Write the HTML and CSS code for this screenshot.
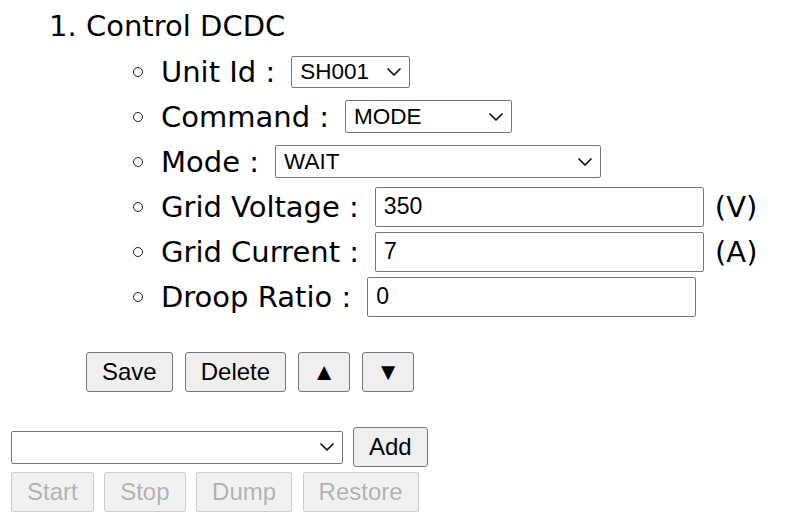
FILE: index.html
```html
<!DOCTYPE html>
<html lang="en">
<head>
<meta charset="utf-8">
<title>Control DCDC</title>
<link rel="stylesheet" href="styles.css">
</head>
<body>
<ol class="list">
  <li class="item">
    <div class="title">Control DCDC</div>
    <ul class="fields">
      <li class="field"><span class="label">Unit Id :</span><span class="select-wrap"><select class="sel sel-unit"><option>SH001</option></select><svg class="chev" viewBox="0 0 14 8" width="14" height="8"><path d="M1 1 L7 7 L13 1" /></svg></span></li>
      <li class="field"><span class="label">Command :</span><span class="select-wrap"><select class="sel sel-cmd"><option>MODE</option></select><svg class="chev" viewBox="0 0 14 8" width="14" height="8"><path d="M1 1 L7 7 L13 1" /></svg></span></li>
      <li class="field"><span class="label">Mode :</span><span class="select-wrap"><select class="sel sel-mode"><option>WAIT</option></select><svg class="chev" viewBox="0 0 14 8" width="14" height="8"><path d="M1 1 L7 7 L13 1" /></svg></span></li>
      <li class="field"><span class="label">Grid Voltage :</span><input class="txt" type="text" value="350"><span class="unit">(V)</span></li>
      <li class="field"><span class="label">Grid Current :</span><input class="txt" type="text" value="7"><span class="unit">(A)</span></li>
      <li class="field"><span class="label">Droop Ratio :</span><input class="txt" type="text" value="0"></li>
    </ul>
    <div class="actions">
      <button class="btn">Save</button>
      <button class="btn">Delete</button>
      <button class="btn btn-arrow">▲</button>
      <button class="btn btn-arrow">▼</button>
    </div>
  </li>
</ol>
<div class="toolbar">
  <span class="select-wrap"><select class="sel sel-add"><option></option></select><svg class="chev" viewBox="0 0 14 8" width="14" height="8"><path d="M1 1 L7 7 L13 1" /></svg></span>
  <button class="btn">Add</button>
</div>
<div class="toolbar toolbar-run">
  <button class="btn" disabled>Start</button>
  <button class="btn" disabled>Stop</button>
  <button class="btn" disabled>Dump</button>
  <button class="btn" disabled>Restore</button>
</div>
</body>
</html>
```

FILE: styles.css
```css
html, body {
  margin: 0;
  padding: 0;
  background: #ffffff;
}
body {
  font-family: "DejaVu Sans", sans-serif;
  font-size: 29px;
  color: #000;
}
.list {
  margin: 4px 0 0 0;
  padding: 0 0 0 86px;
}
.title {
  line-height: 45px;
}
.fields {
  list-style: none;
  margin: 0;
  padding: 0 0 0 47px;
}
.field {
  display: flex;
  align-items: center;
  height: 45px;
  white-space: nowrap;
}
.field::before {
  content: "";
  width: 8px;
  height: 8px;
  border: 1.4px solid #222;
  border-radius: 50%;
  margin-right: 18px;
  flex: none;
}
.label {
  margin-right: 16px;
}
.unit {
  margin-left: 11px;
}
.select-wrap {
  position: relative;
  display: inline-flex;
  align-items: center;
}
.chev {
  position: absolute;
  right: 9px;
  top: 50%;
  margin-top: -4px;
  pointer-events: none;
}
.chev path {
  fill: none;
  stroke: #111;
  stroke-width: 1.7;
  stroke-linecap: round;
  stroke-linejoin: round;
}
.sel {
  -webkit-appearance: none;
  appearance: none;
  font-family: "Liberation Sans", Arial, sans-serif;
  font-size: 22.5px;
  color: #000;
  height: 33px;
  border: 1px solid #767676;
  border-radius: 2px;
  background-color: #fff;
  padding: 0 30px 0 8px;
  margin: 0;
  box-sizing: border-box;
}
.sel-unit { width: 119px; height: 32px; }
.sel-cmd { width: 167px; }
.sel-mode { width: 326px; }
.sel-add { width: 332px; }
.txt {
  font-family: "Liberation Sans", Arial, sans-serif;
  font-size: 23px;
  color: #000;
  width: 329px;
  height: 40px;
  box-sizing: border-box;
  border: 1px solid #767676;
  border-radius: 2px;
  padding: 0 8px;
  margin: 0;
  background: #fff;
}
.actions {
  display: flex;
  gap: 12px;
  margin-top: 33px;
}
.btn {
  font-family: "Liberation Sans", "DejaVu Sans", Arial, sans-serif;
  font-size: 24px;
  color: #000;
  height: 40px;
  padding: 0 15px;
  margin: 0;
  border: 1px solid #767676;
  border-radius: 3px;
  background: #efefef;
  box-sizing: border-box;
}
.btn-arrow {
  width: 52px;
  padding: 0;
}
.btn:disabled {
  color: rgba(16, 16, 16, 0.3);
  border-color: rgba(118, 118, 118, 0.3);
  background: rgba(239, 239, 239, 0.9);
}
.toolbar {
  display: flex;
  align-items: center;
  gap: 10px;
  margin-top: 35px;
  padding-left: 11px;
}
.toolbar-run {
  margin-top: 5px;
  gap: 10.5px;
}
```
